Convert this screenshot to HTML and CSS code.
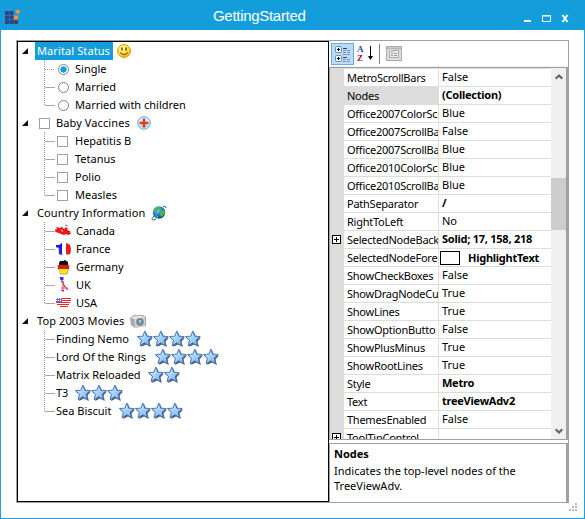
FILE: index.html
```
<!DOCTYPE html>
<html lang="en">
<head>
<meta charset="utf-8">
<title>GettingStarted</title>
<link rel="stylesheet" href="styles.css">
</head>
<body>
<svg class="defs" width="0" height="0" aria-hidden="true">
  <defs>
    <linearGradient id="sg" x1="0" y1="0" x2="1" y2="1"><stop offset="0" stop-color="#e4f3ff"/><stop offset=".5" stop-color="#a6d0f6"/><stop offset="1" stop-color="#75b0ec"/></linearGradient>
    <radialGradient id="face" cx=".4" cy=".3" r=".75"><stop offset="0" stop-color="#fffbb0"/><stop offset=".6" stop-color="#ffdf2e"/><stop offset="1" stop-color="#f49a18"/></radialGradient>
    <radialGradient id="sea" cx=".35" cy=".3" r=".8"><stop offset="0" stop-color="#8fd8ff"/><stop offset=".5" stop-color="#1c7ed0"/><stop offset="1" stop-color="#06366f"/></radialGradient>
    <pattern id="stars" width="16" height="18" patternUnits="userSpaceOnUse">
      <path d="M9 2l2.200 5.200 4.800.3-3.500 4 1.400 5.500L9 14.500 4 17l1.500-6L1 8l5.500-.5z" fill="#555e70"/>
      <path d="M7.800 1l2 5.200 5.400.3-4 3.700 1.300 5.500-4.700-2.900-4.700 2.900 1.300-5.500-4-3.700 5.400-.3z" fill="url(#sg)" stroke="#3268b8" stroke-width=".9"/>
    </pattern>
  </defs>
</svg>
<div class="window">
  <header class="titlebar">
    <svg class="logo" width="16" height="16" viewBox="0 0 16 16"><g fill="#344080"><path d="M0 2h4v4H0zM4.500 2h4v4h-4zM0 6.500h4v4H0zM4.500 6.500h4v4h-4zM0 11h4v4H0zM4.500 11h4v4h-4zM9 11h4v4H9z"/></g><path d="M9 6.500h4v4H9zM12.800 0l2.800 2.500-2.700 2.800-2.800-2.500z" fill="#f59331"/></svg>
    <h1>GettingStarted</h1>
    <svg class="controls" width="46" height="10" viewBox="0 0 46 10"><path d="M0 6h7v2H0z" fill="#fff"/><path d="M18.500 1.500h8v6h-8zM18 2h9" fill="none" stroke="#fff"/><path d="M38.500 1l5 7M43.500 1l-5 7" stroke="#fff" stroke-width="2"/></svg>
  </header>
  <main class="content">
    <section class="tree">
      <div class="node root"><i class="arrow"></i><span class="label selected">Marital Status</span>
        <svg width="14" height="14" viewBox="0 0 14 14"><circle cx="7" cy="7" r="6.500" fill="url(#face)" stroke="#e09a28"/><path d="M5 3.500v3M9 3.500v3" stroke="#503000" stroke-width="1.300"/><path d="M3 8.500q4 4 8 0" fill="none" stroke="#704000"/></svg></div>
      <div class="group">
        <div class="node first"><i class="radio on"></i><span class="label">Single</span></div>
        <div class="node"><i class="radio"></i><span class="label">Married</span></div>
        <div class="node"><i class="radio"></i><span class="label">Married with children</span></div>
      </div>
      <div class="node root"><i class="arrow"></i><i class="check"></i><span class="label baby">Baby Vaccines</span>
        <svg width="14" height="14" viewBox="0 0 14 14"><circle cx="7" cy="7" r="6.300" fill="#d9efff" stroke="#5ba3e3"/><path d="M2.500 9a5 5 0 0 0 9 0" fill="#a7d3f8"/><path d="M7 2.500v9M2.500 7h9" stroke="#e5391b" stroke-width="2.400"/></svg></div>
      <div class="group">
        <div class="node"><i class="check"></i><span class="label">Hepatitis B</span></div>
        <div class="node"><i class="check"></i><span class="label">Tetanus</span></div>
        <div class="node"><i class="check"></i><span class="label">Polio</span></div>
        <div class="node"><i class="check"></i><span class="label">Measles</span></div>
      </div>
      <div class="node root"><i class="arrow"></i><span class="label country">Country Information</span>
        <svg width="16" height="16" viewBox="0 0 16 16"><circle cx="8" cy="7.500" r="6.200" fill="url(#sea)"/><path d="M4 3q4-2 6 0L7 5 5 8 2.500 6zM9 6l4-1 1 3-3 4-2-2zM5 10l2 1v2L5 12z" fill="#48b84b"/><path d="M3 11C-1 15 2 16 5 14M12 2q3-2 3 1" fill="none" stroke="#24557f"/></svg></div>
      <div class="group flags">
        <div class="node"><svg width="17" height="16" viewBox="0 0 17 16"><path d="M2 6l-1-2 4 1 2-1 2 2 2-2 2 2-1 1 3 1 1 3-3 1-2-1-2 1-3-1-5-2-2-2z" fill="#f01414"/><path d="M6 4l2 1M10 2l3 1M14 9l2 2M2 9l2 1" stroke="#777"/><path d="M6 6l2 2-1 1z" fill="#fff"/></svg><span class="label">Canada</span></div>
        <div class="node"><svg width="17" height="16" viewBox="0 0 17 16"><path d="M1 4h3l3-2v12l-3-1V7L1 6z" fill="#1717ed"/><path d="M7 2l4 1v11l-4-1z" fill="#fff"/><path d="M11 2l4 2 1 4-1 5h-4z" fill="#f01818"/><path d="M1 6l3 1v6l4 1M11 14l4-1 1-3M11 2l4 2" fill="none" stroke="#808080" stroke-width=".7"/></svg><span class="label">France</span></div>
        <div class="node"><svg width="17" height="16" viewBox="0 0 17 16"><path d="M5 2h3l2-1 3 2v3H4V4z" fill="#111"/><path d="M3 6h11v4H3z" fill="#e8130f"/><path d="M4 10h9l-1 5H6z" fill="#ffed00"/><path d="M3 6v4l2 2v3h7l1-3 1-3V6" fill="none" stroke="#86764f" stroke-width=".6"/></svg><span class="label">Germany</span></div>
        <div class="node"><svg width="17" height="16" viewBox="0 0 17 16"><path d="M5 0h4L8 3l2 2v3l3 3-1 3-6 1 2-3-2-2 2-2-2-4z" fill="#f5f2ff"/><path d="M5 0h3v3H6zM6 4l3 2M8 7l2 3M6 13l3 1M11 11l2 2" stroke="#3535df" fill="#3434df"/><path d="M6 4l7 9M8 4v11M6 11h7" stroke="#e52b38" stroke-width=".8"/></svg><span class="label">UK</span></div>
        <div class="node"><svg width="17" height="16" viewBox="0 0 17 16"><path d="M1 3h13l2-1-1 5-2 4-2 1-1-1-3 2-2-2-4-3z" fill="#fff"/><path d="M1 3.500h15M1 5.500h15M1 7.500h14M2 9.500h12M5 11.500h8" stroke="#ee2424"/><path d="M1 3h6v4H1z" fill="#6872dd"/><path d="M1 3.500h6M1 5.500h6" stroke="#fff" stroke-dasharray="1 1"/></svg><span class="label">USA</span></div>
      </div>
      <div class="node root"><i class="arrow"></i><span class="label movies">Top 2003 Movies</span>
        <svg class="camera" width="16" height="15" viewBox="0 0 16 15"><path d="M0 4l4-3 9 0 3 2v9l-11 2-4-3z" fill="#a8a8a8"/><path d="M4 5l11-2v9L5 14z" fill="#d0d0d0"/><path d="M1 4l4-2h7l3 1-11 2z" fill="#e8e8e8"/><circle cx="10" cy="8" r="3.700" fill="#737b80"/><circle cx="10" cy="8" r="2.300" fill="#76a5bf"/><path d="M9 7h2" stroke="#d7f3ff"/></svg></div>
      <div class="group films">
        <div class="node"><span class="label nemo">Finding Nemo</span><svg width="64" height="18"><rect width="64" height="18" fill="url(#stars)"/></svg></div>
        <div class="node"><span class="label lord">Lord Of the Rings</span><svg width="64" height="18"><rect width="64" height="18" fill="url(#stars)"/></svg></div>
        <div class="node"><span class="label matrix">Matrix Reloaded</span><svg width="32" height="18"><rect width="32" height="18" fill="url(#stars)"/></svg></div>
        <div class="node"><span class="label t3">T3</span><svg width="48" height="18"><rect width="48" height="18" fill="url(#stars)"/></svg></div>
        <div class="node"><span class="label sea">Sea Biscuit</span><svg width="64" height="18"><rect width="64" height="18" fill="url(#stars)"/></svg></div>
      </div>
    </section>
    <section class="inspector">
      <div class="toolbar">
        <span class="tool active"><svg width="17" height="17" viewBox="0 0 17 17"><g fill="#e9f2fa" stroke="#6b8cab"><rect x=".5" y=".5" width="6" height="6" rx="1"/><rect x=".5" y="9.500" width="6" height="6" rx="1"/></g><path d="M2 3.500h3M3.500 2v3M2 12.500h3M3.500 11v3" stroke="#000"/><path d="M8 2.500h4M8 11.500h4" stroke="#345"/><path d="M8 4.500h8M8 6.500h8M8 8.500h8M8 13.500h8M8 15.500h8" stroke="#8190ad" stroke-dasharray="3 1"/></svg></span>
        <span class="tool sort"><span class="letters"><b>A</b><b>Z</b></span><svg width="5" height="15" viewBox="0 0 5 15"><path d="M2.500 0v12" stroke="#000"/><path d="M0 10h5l-2.500 4z"/></svg></span>
        <i class="separator"></i>
        <svg class="pages" width="16" height="15" viewBox="0 0 16 15"><rect x=".5" y=".5" width="15" height="14" fill="#ddd" stroke="#aaa"/><path d="M1 2.500h14" stroke="#bbb" stroke-width="2"/><path d="M3.500 5.500h4v-1h5v7h-9z" fill="#eee" stroke="#aaa"/><path d="M5 7.500h2M8 7.500h3M5 9.500h2M8 9.500h3" stroke="#999"/></svg>
      </div>
      <div class="sheet">
        <div class="rows">
          <div class="row"><i></i><span class="name">MetroScrollBars</span><span class="value">False</span></div>
          <div class="row current"><i></i><span class="name">Nodes</span><span class="value strong">(Collection)</span></div>
          <div class="row"><i></i><span class="name">Office2007ColorSc</span><span class="value">Blue</span></div>
          <div class="row"><i></i><span class="name">Office2007ScrollBa</span><span class="value">False</span></div>
          <div class="row"><i></i><span class="name">Office2007ScrollBa</span><span class="value">Blue</span></div>
          <div class="row"><i></i><span class="name">Office2010ColorSc</span><span class="value">Blue</span></div>
          <div class="row"><i></i><span class="name">Office2010ScrollBa</span><span class="value">Blue</span></div>
          <div class="row"><i></i><span class="name">PathSeparator</span><span class="value strong">/</span></div>
          <div class="row"><i></i><span class="name">RightToLeft</span><span class="value">No</span></div>
          <div class="row"><i><b class="plus"></b></i><span class="name">SelectedNodeBack</span><span class="value strong">Solid; 17, 158, 218</span></div>
          <div class="row"><i></i><span class="name">SelectedNodeFore</span><span class="value strong color"><em></em>HighlightText</span></div>
          <div class="row"><i></i><span class="name">ShowCheckBoxes</span><span class="value">False</span></div>
          <div class="row"><i></i><span class="name">ShowDragNodeCu</span><span class="value">True</span></div>
          <div class="row"><i></i><span class="name">ShowLines</span><span class="value">True</span></div>
          <div class="row"><i></i><span class="name">ShowOptionButto</span><span class="value">False</span></div>
          <div class="row"><i></i><span class="name">ShowPlusMinus</span><span class="value">True</span></div>
          <div class="row"><i></i><span class="name">ShowRootLines</span><span class="value">True</span></div>
          <div class="row"><i></i><span class="name">Style</span><span class="value strong">Metro</span></div>
          <div class="row"><i></i><span class="name">Text</span><span class="value strong">treeViewAdv2</span></div>
          <div class="row"><i></i><span class="name">ThemesEnabled</span><span class="value">False</span></div>
          <div class="row"><i><b class="plus"></b></i><span class="name">ToolTipControl</span><span class="value"></span></div>
        </div>
        <div class="scrollbar">
          <svg width="8" height="6" viewBox="0 0 8 6"><path d="M.7 4.800L4 1.500l3.300 3.300" fill="none" stroke="#606060" stroke-width="2"/></svg>
          <div class="thumb"></div>
          <svg class="down" width="8" height="6" viewBox="0 0 8 6"><path d="M.7 1.200L4 4.500l3.300-3.300" fill="none" stroke="#606060" stroke-width="2"/></svg>
        </div>
      </div>
      <div class="help"><strong>Nodes</strong><p>Indicates the top-level nodes of the<br>TreeViewAdv.</p></div>
    </section>
  </main>
  <svg class="grip" width="8" height="8" viewBox="0 0 8 8"><path d="M6 0h2v2H6zM3 3h2v2H3zM6 3h2v2H6zM0 6h2v2H0zM3 6h2v2H3zM6 6h2v2H6z" fill="#bbb"/></svg>
</div>
</body>
</html>
```
FILE: styles.css
```
* { box-sizing: border-box; }
body { margin: 0; font: 11px/18px "Noto Sans", sans-serif; color: #000; overflow: hidden; }
i, em { font-style: normal; }
svg { display: block; flex: none; }
.defs { position: absolute; }
.window { width: 585px; height: 519px; border: 1px solid #1ba1e2; border-top: 0; background: #fff; position: relative; }
.titlebar { height: 30px; background: #149ddb; margin: 0 -1px; display: flex; align-items: flex-start; }
.logo { margin: 9px 0 0 5px; }
h1 { margin: 7px 0 0 192px; width: 111px; font: 15px/18px "Liberation Sans", sans-serif; letter-spacing: -.3px; color: #fff; white-space: nowrap; }
.controls { margin: 14px 0 0 200px; }
.content { margin: 10px 0 0 15px; width: 553px; height: 463px; border: 1px solid #a0a0a0; display: flex; }
.tree { width: 312px; height: 461px; border: 1px solid #000; }
.node { display: flex; align-items: center; height: 18px; white-space: nowrap; }
.label { letter-spacing: 0; }
.arrow { width: 6px; height: 6px; margin: 0 7px 0 4px; background: #111; clip-path: polygon(100% 0, 100% 100%, 0 100%); }
.selected { width: 78px; height: 18px; padding-left: 2px; margin-right: 4px; background: #149ddb; color: #fff; }
.group { margin-left: 26px; background: repeating-linear-gradient(to bottom, #999 0 1px, transparent 1px 2px) 0 0 / 1px calc(100% - 8px) no-repeat; }
.group .node::before { content: ""; width: 10px; height: 1px; margin: 1px 3px 0 1px; background: #aaa; }
.group .first::before { background: repeating-linear-gradient(to right, #999 0 1px, transparent 1px 2px); }
.radio { width: 11px; height: 11px; border: 1px solid #808080; border-radius: 50%; margin-right: 6px; background: #fff; }
.radio.on { background: radial-gradient(circle, #149ddb 0 2.8px, #fff 3.5px); }
.check { width: 11px; height: 11px; border: 1px solid #a0a0a0; background: #fff; margin-right: 7px; }
.group .check { margin-left: -1px; }
.root .check { margin: 0 6px 0 4px; }
.baby { width: 81px; }
.root .label { letter-spacing: .1px; }
.country { width: 114px; margin-left: 2px; }
.movies { width: 93px; margin-left: 2px; }
.flags .node::before { margin-right: 0; }
.flags svg { margin-right: 4px; }
.films .node::before { margin-right: 1px; }
.nemo { width: 81px; }
.lord { width: 99px; }
.matrix { width: 92px; }
.t3 { width: 19px; }
.sea { width: 63px; }
.inspector { width: 239px; }
.toolbar { height: 26px; display: flex; align-items: center; border-bottom: 1px solid #f0f0f0; }
.tool.active { width: 23px; height: 22px; margin-left: 2px; border: 1px solid #66abe5; background: #b9dcf9; padding: 2px 0 0 3px; }
.sort { width: 19px; height: 20px; margin-left: 3px; display: flex; align-items: center; }
.letters { width: 11px; font: bold 9px/9px "Liberation Serif", serif; color: #294e94; }
.letters b { display: block; }
.letters b + b { color: #8d1738; }
.separator { width: 1px; height: 20px; background: #808080; margin: 0 6px 0 3px; }
.sheet { height: 373px; border: 1px solid #a0a0a0; border-right-width: 2px; display: flex; overflow: hidden; }
.rows { width: 221px; height: 371px; overflow: hidden; background: #fff; }
.row { display: grid; grid-template-columns: 14px 95px 112px; height: 18px; }
.row i { background: #dcdcdc; padding: 5px 0 0 2px; }
.row .name, .row .value { border-top: 1px solid #dcdcdc; white-space: nowrap; overflow: hidden; height: 18px; }
.row .name { padding-left: 3px; border-right: 1px solid #dcdcdc; letter-spacing: -.25px; line-height: 17px; }
.row .value { padding-left: 3px; line-height: 15px; }
.row.current .name { background: #dcdcdc; }
.row .strong { font-weight: bold; letter-spacing: -.25px; }
.color { display: flex; align-items: center; }
.color em { width: 20px; height: 14px; border: 1px solid #000; margin: 1px 8px 0 -2px; }
.plus { display: block; width: 9px; height: 9px; border: 1px solid #000; background: linear-gradient(#000, #000) center / 5px 1px no-repeat, linear-gradient(#000, #000) center / 1px 5px no-repeat, #fff; }
.scrollbar { width: 15px; background: #f0f0f0; display: flex; flex-direction: column; align-items: center; padding-top: 6px; }
.thumb { width: 15px; height: 52px; background: #cdcdcd; margin-top: 98px; }
.down { margin-top: 198px; }
.help { height: 59px; margin-top: 3px; border: 1px solid #a0a0a0; border-right-width: 2px; border-bottom: 0; padding: 1px 0 0 4px; line-height: 15px; }
.help strong { display: block; line-height: 18px; }
.help p { margin: 0; letter-spacing: 0; }
.grip { position: absolute; right: 7px; bottom: 7px; }
```
